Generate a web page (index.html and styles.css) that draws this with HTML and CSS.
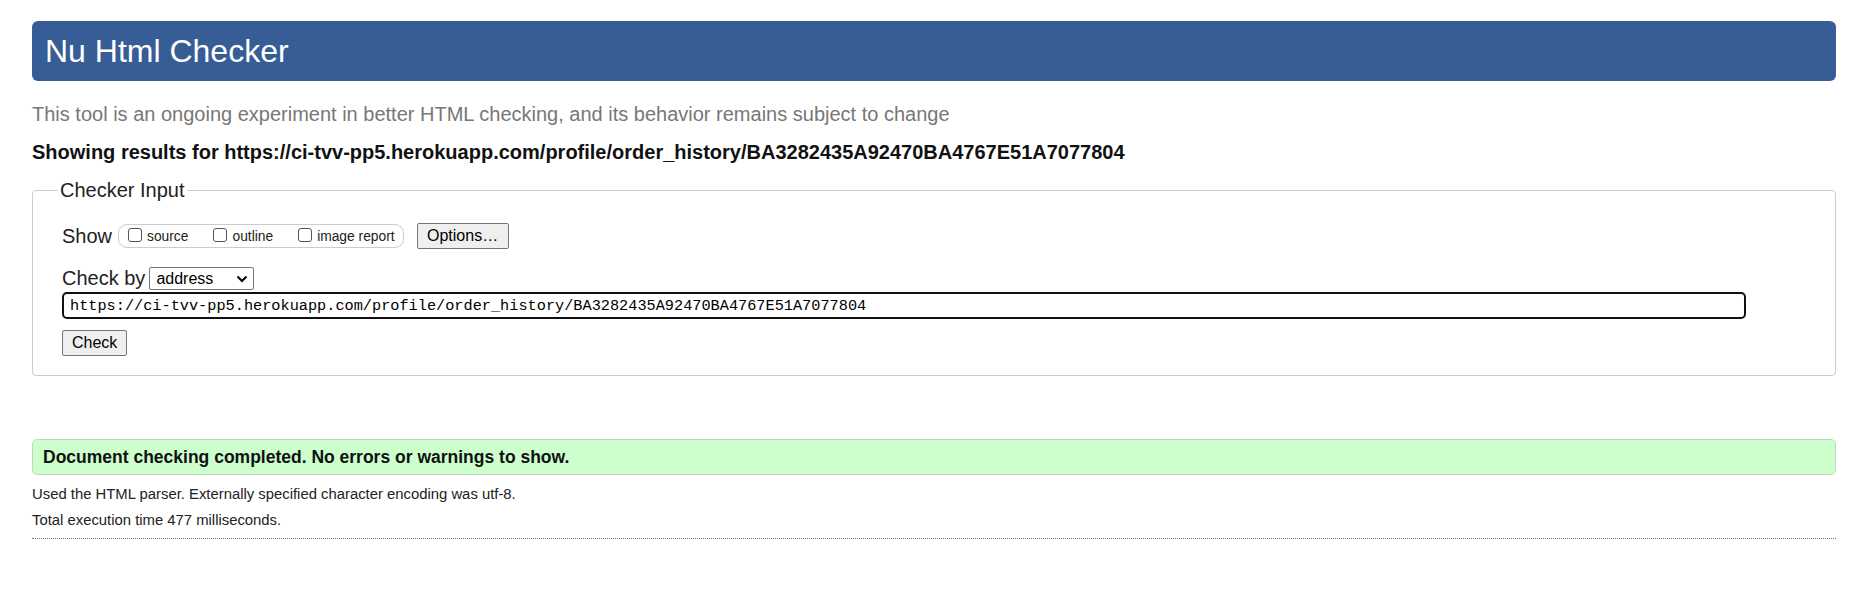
FILE: index.html
```html
<!DOCTYPE html>
<html lang="en">
<head>
<meta charset="utf-8">
<title>Nu Html Checker</title>
<link rel="stylesheet" href="styles.css">
</head>
<body>
<h1 class="title">Nu Html Checker</h1>
<p class="lead">This tool is an ongoing experiment in better HTML checking, and its behavior remains subject to change</p>
<p class="showing">Showing results for https://ci-tvv-pp5.herokuapp.com/profile/order_history/BA3282435A92470BA4767E51A7077804</p>
<form class="checker">
  <fieldset class="inputs">
    <legend class="legend">Checker Input</legend>
    <div class="row show-row">
      <span class="row-label">Show</span>
      <span class="options-group">
        <label class="opt"><input type="checkbox" class="cb">source</label>
        <label class="opt"><input type="checkbox" class="cb">outline</label>
        <label class="opt last"><input type="checkbox" class="cb">image report</label>
      </span>
      <button type="button" class="btn options-btn">Options…</button>
    </div>
    <div class="row checkby-row">
      <span class="row-label">Check by</span>
      <span class="select-wrap">
        <select class="select"><option>address</option></select>
        <svg class="chev" width="12" height="8" viewBox="0 0 12 8"><path d="M1.5 1.5 L6 6 L10.5 1.5" fill="none" stroke="#000" stroke-width="2"/></svg>
      </span>
    </div>
    <input class="url" type="text" value="https://ci-tvv-pp5.herokuapp.com/profile/order_history/BA3282435A92470BA4767E51A7077804">
    <button type="button" class="btn check-btn">Check</button>
  </fieldset>
</form>
<p class="success">Document checking completed. No errors or warnings to show.</p>
<p class="details">Used the HTML parser. Externally specified character encoding was utf-8.</p>
<p class="details total">Total execution time 477 milliseconds.</p>
<hr class="rule">
</body>
</html>
```
FILE: styles.css
```css
html, body {
  margin: 0;
  padding: 0;
  background: #fff;
}
body {
  padding: 21px 29px 0 32px;
  font-family: "Liberation Sans", Arial, sans-serif;
  color: #111;
}
.title {
  margin: 0;
  height: 60px;
  line-height: 60px;
  padding: 0 13px;
  font-size: 32px;
  font-weight: normal;
  color: #fff;
  background: #365d95;
  border-radius: 6px;
}
.lead {
  margin: 21px 0 0;
  font-size: 20px;
  line-height: 24px;
  color: #777;
}
.showing {
  margin: 14px 0 0;
  font-size: 20px;
  line-height: 24px;
  font-weight: bold;
  color: #111;
}
.checker {
  margin: 14px 0 0;
}
.inputs {
  margin: 0;
  padding: 0 29px 19px 29px;
  border: 1px solid #ccc;
  border-radius: 4px;
  min-width: 0;
}
.legend {
  margin-left: -4px;
  padding: 0 2px;
  font-size: 20px;
  line-height: 24px;
  color: #222;
}
.row {
  display: flex;
  align-items: center;
}
.row-label {
  font-size: 20px;
  line-height: 24px;
  color: #222;
}
.show-row {
  margin-top: 21px;
  height: 26px;
}
.options-group {
  display: inline-flex;
  align-items: center;
  margin-left: 6px;
  height: 22px;
  padding: 0 8px 0 9px;
  border: 1px solid #ccc;
  border-radius: 9px;
  font-size: 13.8px;
  color: #222;
}
.opt {
  display: inline-flex;
  align-items: center;
  margin-right: 25px;
}
.opt.last {
  margin-right: 0;
}
.cb {
  appearance: none;
  -webkit-appearance: none;
  width: 14px;
  height: 14px;
  margin: -3px 5px 0 0;
  border: 1px solid #555;
  border-radius: 3px;
  background: #fff;
}
.btn {
  font-family: "Liberation Sans", Arial, sans-serif;
  font-size: 16px;
  line-height: 18px;
  height: 26px;
  padding: 0 9px;
  color: #000;
  background: #efefef;
  border: 1px solid #767676;
  border-radius: 2px;
}
.options-btn {
  margin-left: 13px;
  width: 92px;
}
.checkby-row {
  margin-top: 18px;
  height: 22px;
}
.select-wrap {
  position: relative;
  display: inline-block;
  margin-left: 4px;
}
.select {
  appearance: none;
  -webkit-appearance: none;
  width: 105px;
  height: 23px;
  padding: 0 0 0 6px;
  font-family: "Liberation Sans", Arial, sans-serif;
  font-size: 16px;
  color: #000;
  background: #fff;
  border: 1px solid #767676;
  border-radius: 2px;
}
.chev {
  position: absolute;
  right: 6px;
  top: 8px;
  pointer-events: none;
}
.url {
  display: block;
  box-sizing: border-box;
  width: 1684px;
  height: 27px;
  margin: 3px 0 0 0;
  padding: 0 0 0 6px;
  font-family: "Liberation Mono", "DejaVu Sans Mono", monospace;
  font-size: 15.25px;
  color: #000;
  border: 2px solid #101010;
  border-radius: 5px;
  outline: none;
}
.check-btn {
  display: block;
  margin-top: 11px;
  width: 65px;
}
.success {
  margin: 63px 0 0;
  height: 34px;
  line-height: 34px;
  padding: 0 10px;
  font-size: 17.5px;
  font-weight: bold;
  color: #111;
  background: #ccffcc;
  border: 1px solid #c2d6c2;
  border-radius: 5px;
}
.details {
  margin: 10px 0 0;
  font-size: 14.85px;
  line-height: 18px;
  color: #222;
}
.details.total {
  margin-top: 8px;
}
.rule {
  margin: 9px 0 0;
  height: 0;
  border: 0;
  border-top: 1px dotted #777;
}
```
